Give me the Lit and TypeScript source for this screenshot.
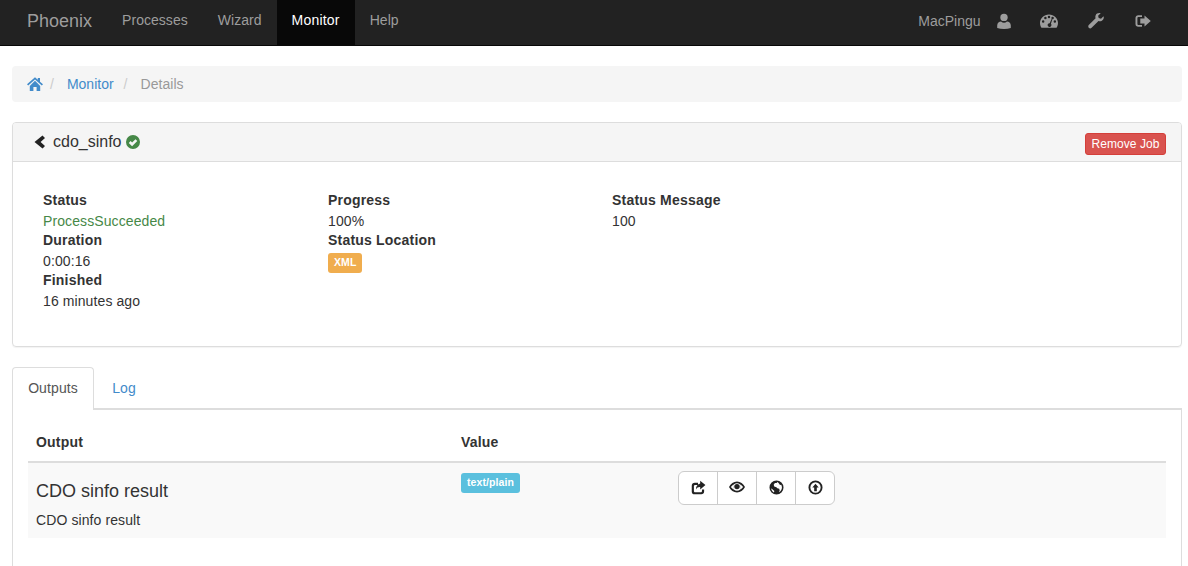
import { LitElement, html, css, svg } from "lit";
import { customElement } from "lit/decorators.js";

const icon = (body: unknown, cls = "") => html`<svg class="ic ${cls}" viewBox="0 0 16 16" fill="currentColor" aria-hidden="true">${body}</svg>`;

const I = {
  home: svg`<path d="M8 1.200 0 8.300l1.200 1.300L8 3.600l6.800 6 1.200-1.300-3-2.600V2h-2.200v1.800L8 1.200z"/><path d="M2.800 10 8 4.800l5.200 5.200v5H9.600v-4H6.400v4H2.800z"/>`,
  back: svg`<path d="M10.500 1.500 13 4 8.600 8 13 12 10.500 14.500 2.500 8z"/>`,
  ok: svg`<path fill-rule="evenodd" d="M8 1a7 7 0 1 1 0 14A7 7 0 0 1 8 1zm-.9 11.200 5.200-5.200-1.800-1.800-3.400 3.400-1.500-1.500-1.800 1.800z"/>`,
  user: svg`<circle cx="8" cy="4.400" r="3.700"/><path d="M1.200 15v-2.600c0-2.400 2-3.900 3.800-3.900 1 .8 2 1.200 3 1.200s2-.4 3-1.200c1.800 0 3.800 1.500 3.800 3.900V15c-2 .6-4.200.9-6.800.9s-4.800-.3-6.800-.9z"/>`,
  dash: svg`<path fill-rule="evenodd" d="M8 2.200c4.400 0 8 3.300 8 7.500 0 1.600-.5 3-1.300 4.200H1.300C.5 12.700 0 11.300 0 9.700c0-4.200 3.600-7.500 8-7.500zM4.800 4.300a1.100 1.100 0 1 0 0 2.200 1.100 1.100 0 0 0 0-2.200zM8 3.400a1.100 1.100 0 1 0 0 2.200 1.100 1.100 0 0 0 0-2.200zM2.800 7.300a1.100 1.100 0 1 0 0 2.200 1.100 1.100 0 0 0 0-2.200zM13.200 7.300a1.100 1.100 0 1 0 0 2.200 1.100 1.100 0 0 0 0-2.200zM11.200 4.300a1.100 1.100 0 1 0 0 2.200 1.100 1.100 0 0 0 0-2.200zM10.300 6.200 8.600 9.900a1.700 1.700 0 1 0 1.100.5l1.300-3.900z"/>`,
  wrench: svg`<path d="M15.500 3.200 13 5.700l-2.300-.6-.6-2.300L12.700.3C10.600-.4 8.300.5 7.600 2.400c-.4 1-.3 2 0 2.900L.8 12.100c-.7.700-.7 1.900 0 2.700.8.800 2 .8 2.800 0l6.900-6.800c1 .3 2 .3 3-.1 1.900-.8 2.800-2.900 2-4.700z"/>`,
  logout: svg`<path d="M.5 5C.5 3.300 1.600 2.200 3.300 2.200H7v1.800H3.600c-.8 0-1.200.5-1.200 1.200v5.600c0 .8.400 1.200 1.200 1.200H7v1.800H3.300C1.600 13.800.5 12.700.5 11z"/><path d="M9.500 2.600 15.800 8l-6.300 5.400V10.400H5.300V5.600h4.200z"/>`,
  share: svg`<path d="M.8 6.200C.8 4.400 2.100 3 4 3h3.500v2.200H4.500c-.9 0-1.400.6-1.400 1.400v5c0 .8.500 1.400 1.400 1.400h5.800c.9 0 1.400-.6 1.400-1.400V10H14v2.300c0 1.800-1.300 2.900-3 2.900H3.800c-1.800 0-3-1.100-3-2.800z"/><path d="M9.800.8 15.400 5.400 9.800 10V7.400C7.800 7.300 6.200 8 5.300 10.200 5.200 6.700 7.100 4.100 9.800 3.700z"/>`,
  eye: svg`<path fill-rule="evenodd" d="M8 2.600c3.400 0 6.300 2.100 8 5.400-1.700 3.300-4.600 5.400-8 5.400S1.700 11.300 0 8c1.700-3.300 4.600-5.400 8-5.400zM8 4.200a3.800 3.800 0 1 0 0 7.600 3.800 3.800 0 0 0 0-7.600zM1.900 8c.8 1.200 1.900 2.200 3.100 2.800A5 5 0 0 1 5 5.200C3.800 5.800 2.700 6.800 1.900 8zM11 5.200a5 5 0 0 1 0 5.600c1.200-.6 2.300-1.600 3.100-2.800-.8-1.200-1.900-2.200-3.100-2.800z"/><circle cx="8" cy="7.600" r="2.700"/>`,
  globe: svg`<path fill-rule="evenodd" d="M8 .5a7.500 7.500 0 1 1 0 15A7.500 7.500 0 0 1 8 .5zM9.200 2 8 3.300l-1.700-.2-1.300 2 .6 1.900 2.300.6 1 1.200 2 .6.500 1.700-.8 2c1.800-.9 3.200-3 3.200-5.100 0-1.200-.3-2.100-.8-3l-1.300.4-.9-1.500zM3 9.400 2.300 9c.3 1.700 1.300 3.300 2.900 4.300l.5-1.700z"/>`,
  upload: svg`<path fill-rule="evenodd" d="M8 .5a7.500 7.500 0 1 1 0 15A7.500 7.500 0 0 1 8 .5zm0 2a5.500 5.500 0 1 0 0 11A5.500 5.500 0 0 0 8 2.500zM8 4l3.400 3.900H9.400V12H6.600V7.900H4.600z"/>`,
};

@customElement("app-root")
export class AppRoot extends LitElement {
  static styles = css`
    :host { display: block; height: 566px; overflow: hidden; font: 14px/20px "Liberation Sans", Arial, sans-serif; letter-spacing: .1px; color: #333; background: #fff; }
    * { box-sizing: border-box; }
    a { color: #428bca; text-decoration: none; }
    .ic { width: 1em; height: 1em; display: block; }
    nav { height: 46px; background: #222; border-bottom: 1px solid #080808; display: flex; padding-left: 12px; color: #9d9d9d; }
    .brand { font-size: 18px; padding: 0 15px; line-height: 42px; letter-spacing: 0; color: #9d9d9d; }
    .item { padding: 0 15px; line-height: 40px; color: #9d9d9d; letter-spacing: .04px; }
    .item.active { background: #080808; color: #fff; height: 45px; letter-spacing: .2px; }
    .right { margin-left: auto; display: flex; align-items: center; padding-right: 21px; height: 42px; }
    .right .who { margin-right: 15px; letter-spacing: 0; }
    .right .ic { font-size: 16px; color: #9d9d9d; }
    .right .ic.big { font-size: 18px; }
    .right .g { width: 47.5px; display: flex; justify-content: center; }
    .right .g.dash { padding-left: 1px; }
    .right .g.first { width: 16px; margin-right: 13px; }
    main { padding: 20px 6px 0 12px; }
    .crumb { height: 36px; background: #f5f5f5; border-radius: 4px; display: flex; align-items: center; padding: 0 15px; letter-spacing: 0; }
    .crumb .home { font-size: 16px; color: #428bca; }
    .crumb .sep { color: #ccc; padding: 0 13px 0 7px; }
    .crumb .sep.second { padding-left: 10px; }
    .crumb .cur { color: #999; letter-spacing: .05px; }
    .panel { margin-top: 20px; height: 225px; border: 1px solid #ddd; border-radius: 4px; box-shadow: 0 1px 1px rgba(0,0,0,.05); }
    .phead { height: 39px; background: #f5f5f5; border-bottom: 1px solid #ddd; display: flex; align-items: center; padding: 0 15px 0 19px; color: #333; font-size: 16px; letter-spacing: 0; border-radius: 3px 3px 0 0; }
    .phead .back { font-size: 16px; color: #222; margin-right: 5px; }
    .phead .ok { font-size: 16px; color: #468847; margin-left: 3px; }
    .btn-rm { margin: 4px 0 0 auto; height: 22px; width: 81px; background: #d9534f; border: 1px solid #d43f3a; border-radius: 3px; color: #fff; font-size: 12px; line-height: 21px; text-align: center; letter-spacing: .05px; }
    .pbody { padding: 28px 0 0 30px; display: grid; grid-template-columns: 285px 284px 1fr; color: #333; }
    b { font-weight: 700; display: block; letter-spacing: .2px; }
    .val { padding-top: 1px; margin-bottom: -1px; }
    .green { color: #468847; }
    .label { display: inline-block; font-size: 10.500px; line-height: 11px; font-weight: 700; color: #fff; padding: 4px 6px 5px; border-radius: 3px; vertical-align: top; }
    .warn { background: #f0ad4e; margin-top: 3px; height: 20px; }
    .info { background: #5bc0de; }
    .tabs { margin-top: 20px; display: flex; height: 43px; border-bottom: 2px solid #ddd; position: relative; }
    .tab { width: 82px; height: 43px; border: 1px solid #ddd; border-bottom: 0; border-radius: 4px 4px 0 0; background: #fff; color: #555; display: flex; align-items: center; justify-content: center; padding-bottom: 3px; }
    .tab.link { width: 60px; border-color: transparent; background: none; color: #428bca; }
    .content { height: 160px; border: 1px solid #ddd; border-top: 0; border-radius: 0 0 4px 4px; padding: 11px 15px 0; }
    .row { display: grid; grid-template-columns: 425px 217px 1fr; padding-left: 8px; }
    .thead { height: 42px; border-bottom: 2px solid #ddd; align-items: center; font-weight: 700; color: #333; padding-top: 1px; letter-spacing: .2px; }
    .tbody { height: 75px; background: #f9f9f9; color: #333; }
    .title { font-size: 18px; line-height: 20px; margin-top: 18px; letter-spacing: 0; }
    .sub { margin-top: 9px; }
    .tbody .label { margin-top: 10px; height: 20px; letter-spacing: .1px; }
    .group { margin-top: 8px; display: flex; width: 157px; height: 34px; border: 1px solid #ccc; border-radius: 6px; background: #fff; color: #222; }
    .group span { flex: 1; display: flex; align-items: center; justify-content: center; font-size: 15px; border-left: 1px solid #ccc; padding-bottom: 2px; }
    .group span:first-child { border-left: 0; }
    .group .ic.eye { font-size: 16px; }
  `;

  render() {
    return html`
      <nav>
        <span class="brand">Phoenix</span>
        <span class="item">Processes</span>
        <span class="item">Wizard</span>
        <span class="item active">Monitor</span>
        <span class="item">Help</span>
        <div class="right">
          <span class="who">MacPingu</span>
          <span class="g first">${icon(I.user)}</span>
          <span class="g dash">${icon(I.dash, "big")}</span>
          <span class="g">${icon(I.wrench)}</span>
          <span class="g">${icon(I.logout)}</span>
        </div>
      </nav>
      <main>
        <div class="crumb">
          <a class="home">${icon(I.home)}</a><span class="sep">/</span>
          <a>Monitor</a><span class="sep second">/</span>
          <span class="cur">Details</span>
        </div>
        <section class="panel">
          <div class="phead">
            <span class="back">${icon(I.back)}</span>
            <span>cdo_sinfo</span>
            <span class="ok">${icon(I.ok)}</span>
            <span class="btn-rm">Remove Job</span>
          </div>
          <div class="pbody">
            <div>
              <b>Status</b><div class="val green">ProcessSucceeded</div>
              <b>Duration</b><div class="val">0:00:16</div>
              <b>Finished</b><div class="val">16 minutes ago</div>
            </div>
            <div>
              <b>Progress</b><div class="val">100%</div>
              <b>Status Location</b><span class="label warn">XML</span>
            </div>
            <div>
              <b>Status Message</b><div class="val">100</div>
            </div>
          </div>
        </section>
        <div class="tabs">
          <span class="tab">Outputs</span>
          <span class="tab link">Log</span>
        </div>
        <div class="content">
          <div class="row thead"><span>Output</span><span>Value</span><span></span></div>
          <div class="row tbody">
            <div>
              <div class="title">CDO sinfo result</div>
              <div class="sub">CDO sinfo result</div>
            </div>
            <div><span class="label info">text/plain</span></div>
            <div class="group">
              <span>${icon(I.share)}</span>
              <span>${icon(I.eye, "eye")}</span>
              <span>${icon(I.globe)}</span>
              <span>${icon(I.upload)}</span>
            </div>
          </div>
        </div>
      </main>
    `;
  }
}
